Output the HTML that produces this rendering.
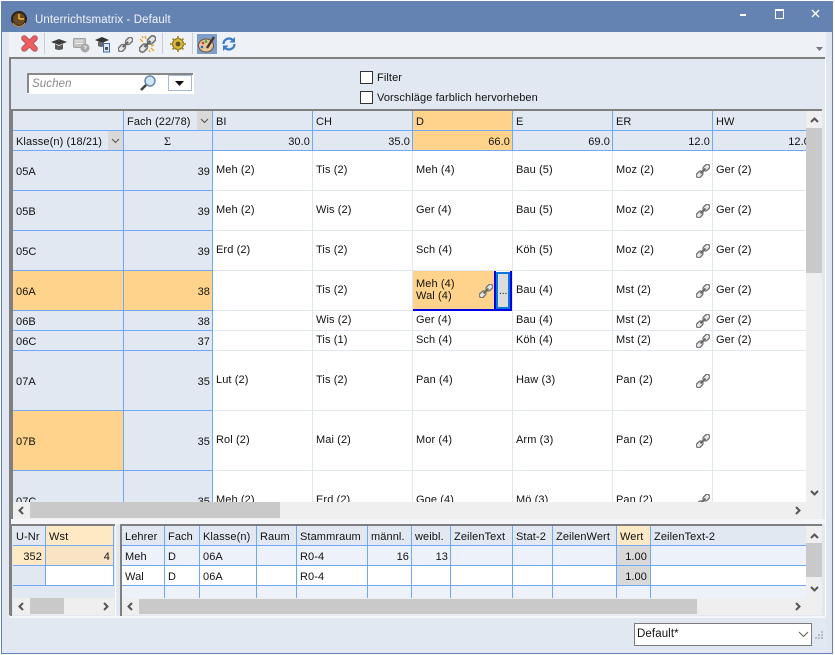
<!DOCTYPE html>
<html><head><meta charset="utf-8"><style>
html,body{margin:0;padding:0}
body{width:835px;height:655px;position:relative;overflow:hidden;background:#fff;font-family:"Liberation Sans",sans-serif;font-size:11px;letter-spacing:.1px;color:#111}
div,span,svg{position:absolute}
span{white-space:nowrap;line-height:14px;height:14px;margin-top:1px}
span.r{text-align:right}
.hb{background:#e1e8f1}
.bv{width:1px;background:#6fa8f7}
.bh{height:1px;background:#6fa8f7}
.lv{width:1px;background:#e0e7f3}
.lh{height:1px;background:#e0e7f3}
.arrow{fill:none;stroke:#555;stroke-width:2}
</style></head><body>
<svg width="0" height="0" style="left:0;top:0"><defs>
<symbol id="chain" viewBox="0 0 14 14"><g transform="rotate(-45 7 7)"><rect x="-1.5" y="4.6" width="7.5" height="4.8" rx="2.4" fill="#e8e8e8" stroke="#777" stroke-width="1.4"/><rect x="8" y="4.6" width="7.5" height="4.8" rx="2.4" fill="#e8e8e8" stroke="#777" stroke-width="1.4"/><path d="M3.5 7H10.5" stroke="#666" stroke-width="2"/></g></symbol>
</defs></svg>

<!-- window frame -->
<div style="left:1px;top:1px;width:832px;height:653px;background:#e1e8f1"></div>
<div style="left:1px;top:1px;width:832px;height:31px;background:#6583b2"></div>
<div style="left:1px;top:1px;width:1px;height:652px;background:#6583b2"></div>
<div style="left:832px;top:1px;width:1px;height:652px;background:#6583b2"></div>
<div style="left:1px;top:653px;width:832px;height:1px;background:#6583b2"></div>

<!-- title -->
<svg style="left:10px;top:10px" width="18" height="18" viewBox="0 0 18 18"><circle cx="9" cy="9" r="8" fill="#2a2118"/><circle cx="9" cy="9" r="6" fill="#6a4a26"/><path d="M9 9V4M9 9H14" stroke="#f5b526" stroke-width="1.5"/><path d="M3 13A7 7 0 0 0 15 13" stroke="#d9a25c" fill="none"/></svg>
<span style="left:35px;top:12px;color:#f1f4f9;font-size:11.5px;letter-spacing:.08px">Unterrichtsmatrix - Default</span>
<div style="left:740px;top:14px;width:6px;height:2px;background:#fff"></div>
<div style="left:775px;top:9px;width:7px;height:7px;border:1px solid #fff;border-top-width:2px"></div>
<svg style="left:810px;top:8px" width="11" height="11" viewBox="0 0 11 11"><path d="M2 2L9 9M9 2L2 9" stroke="#fff" stroke-width="1.4"/></svg>

<!-- toolbar -->
<div style="left:9px;top:32px;width:817px;height:25px;background:#eef1f6"></div>
<div style="left:826px;top:32px;width:6px;height:621px;background:#dfe6f0"></div>
<svg style="left:21px;top:35px" width="17" height="17" viewBox="0 0 17 17"><path d="M3.2 3.2L13.8 13.8M13.8 3.2L3.2 13.8" stroke="#b4565a" stroke-width="6" stroke-linecap="round"/><path d="M3.2 3.2L13.8 13.8M13.8 3.2L3.2 13.8" stroke="#ef5d60" stroke-width="4" stroke-linecap="round"/></svg>
<div style="left:44px;top:33px;width:1px;height:21px;background:#c9ced6"></div>
<svg style="left:51px;top:38px" width="16" height="13" viewBox="0 0 16 13"><path d="M0 4L8 1L16 4L8 7Z" fill="#3c3c3c"/><path d="M4 6V11Q8 13 12 11V6L8 8Z" fill="#5a5a5a"/></svg>
<svg style="left:73px;top:38px" width="17" height="15" viewBox="0 0 17 15"><rect x="0.5" y="0.5" width="12" height="9" rx="1" fill="#c4c4c4" stroke="#a2a2a2"/><path d="M2 3H10M2 5.5H10" stroke="#eee"/><circle cx="12" cy="10" r="4.5" fill="#a8a8a8"/><path d="M10.7 8.8Q12 7.5 13.2 8.8Q13.2 10 12 10.3V11" stroke="#eee" fill="none"/></svg>
<svg style="left:95px;top:37px" width="16" height="16" viewBox="0 0 16 16"><path d="M0 3L7 0L14 3L7 6Z" fill="#333"/><path d="M3 5V9Q7 11 9 9V5Z" fill="#666"/><rect x="8.5" y="6.5" width="6" height="8.5" fill="#dfe7f3" stroke="#3a6aa8"/><rect x="10" y="10" width="3" height="3" fill="#555"/></svg>
<svg style="left:118px;top:37px" width="15" height="15"><use href="#chain" width="15" height="15"/></svg>
<svg style="left:139px;top:35px" width="17" height="18" viewBox="0 0 17 18"><use href="#chain" width="17" height="18"/><path d="M1 4L4 7M6 1L7 4M12 13L15 16M15 10L12 11M3 1L4 3M10 15L11 17" stroke="#e8a51c" stroke-width="1.3"/></svg>
<div style="left:162px;top:33px;width:1px;height:21px;background:#c9ced6"></div>
<svg style="left:170px;top:36px" width="16" height="16" viewBox="0 0 16 16"><circle cx="8" cy="8" r="5.5" fill="#d8b83a" stroke="#7c6a22"/><circle cx="8" cy="8" r="2.4" fill="#5f5220"/><path d="M8 0V3M8 13V16M0 8H3M13 8H16M2.5 2.5L4.5 4.5M11.5 11.5L13.5 13.5M13.5 2.5L11.5 4.5M2.5 13.5L4.5 11.5" stroke="#a68f2c" stroke-width="1.8"/></svg>
<div style="left:192px;top:33px;width:1px;height:21px;background:#c9ced6"></div>
<div style="left:197px;top:34px;width:20px;height:20px;background:#7d9dcb"></div>
<svg style="left:198px;top:35px" width="18" height="18" viewBox="0 0 18 18"><ellipse cx="8" cy="10.5" rx="7.5" ry="6.5" fill="#e3c79c" stroke="#6e5230"/><circle cx="5" cy="8" r="1.3" fill="#d33"/><circle cx="8" cy="6.5" r="1.3" fill="#3a3"/><circle cx="4" cy="12" r="1.3" fill="#36c"/><path d="M9 13L16 2" stroke="#4a3420" stroke-width="2.4"/></svg>
<svg style="left:221px;top:36px" width="16" height="16" viewBox="0 0 16 16"><circle cx="8" cy="8" r="6.5" fill="#e7f0fa"/><path d="M2.5 8A5.5 5.5 0 0 1 12 4.3M13.5 8A5.5 5.5 0 0 1 4 11.7" fill="none" stroke="#3d7cc4" stroke-width="2.2"/><path d="M13.5 1.5V6H9M2.5 14.5V10H7" fill="#3d7cc4" stroke="#3d7cc4"/></svg>
<svg style="left:816px;top:47px" width="7" height="4"><path d="M0 0H7L3.5 4Z" fill="#777"/></svg>

<!-- panel -->
<div style="left:9px;top:57px;width:816px;height:2px;background:#7f7f7f"></div>
<div style="left:9px;top:57px;width:2px;height:558px;background:#7f7f7f"></div>
<div style="left:825px;top:58px;width:1px;height:559px;background:#fff"></div>
<div style="left:9px;top:616px;width:817px;height:2px;background:#f4f6f9"></div>

<!-- search -->
<div style="left:27px;top:73px;width:167px;height:21px;background:#fff"></div>
<div style="left:27px;top:73px;width:166px;height:2px;background:#888"></div>
<div style="left:27px;top:73px;width:2px;height:20px;background:#888"></div>
<span style="left:32px;top:76px;font-style:italic;color:#8a8a8a;font-size:11.5px">Suchen</span>
<svg style="left:139px;top:74px" width="18" height="18" viewBox="0 0 18 18"><circle cx="11" cy="7" r="5" fill="#cfe6f7" stroke="#6a8aa8" stroke-width="1.5"/><path d="M7 11L2 16" stroke="#444" stroke-width="2.6"/></svg>
<div style="left:168px;top:75px;width:24px;height:16px;border:1px solid #a9b8cf;background:#fff;box-sizing:border-box"></div>
<svg style="left:175px;top:81px" width="9" height="5"><path d="M0 0H9L4.5 5Z" fill="#111"/></svg>

<!-- checkboxes -->
<div style="left:360px;top:71px;width:11px;height:11px;border:1px solid #333;background:#fff"></div>
<span style="left:377px;top:70px">Filter</span>
<div style="left:360px;top:91px;width:11px;height:11px;border:1px solid #333;background:#fff"></div>
<span style="left:377px;top:90px">Vorschläge farblich hervorheben</span>

<!-- main grid frame -->
<div style="left:11px;top:109px;width:811px;height:2px;background:#7f7f7f"></div>
<div style="left:11px;top:109px;width:2px;height:410px;background:#7f7f7f"></div>

<div style="left:13px;top:111px;width:793px;height:391px;overflow:hidden;background:#fff">
<div style="left:-13px;top:-111px;width:835px;height:655px">
 <div class="hb" style="left:13px;top:111px;width:800px;height:40px"></div>
 <div class="hb" style="left:13px;top:151px;width:199px;height:360px"></div>
 <div style="left:413px;top:111px;width:99px;height:39px;background:#ffd38b"></div>
 <div style="left:13px;top:271px;width:199px;height:39px;background:#ffd38b"></div>
 <div style="left:13px;top:411px;width:110px;height:59px;background:#ffd38b"></div>
 <div style="left:413px;top:271px;width:82px;height:38px;background:#ffd38b"></div>

 <!-- light lines -->
 <div class="lv" style="left:312px;top:151px;height:360px"></div>
 <div class="lv" style="left:412px;top:151px;height:360px"></div>
 <div class="lv" style="left:512px;top:151px;height:360px"></div>
 <div class="lv" style="left:612px;top:151px;height:360px"></div>
 <div class="lv" style="left:712px;top:151px;height:360px"></div>
 <div class="lh" style="left:213px;top:190px;width:600px"></div>
 <div class="lh" style="left:213px;top:230px;width:600px"></div>
 <div class="lh" style="left:213px;top:270px;width:600px"></div>
 <div class="lh" style="left:213px;top:310px;width:600px"></div>
 <div class="lh" style="left:213px;top:330px;width:600px"></div>
 <div class="lh" style="left:213px;top:350px;width:600px"></div>
 <div class="lh" style="left:213px;top:410px;width:600px"></div>
 <div class="lh" style="left:213px;top:470px;width:600px"></div>

 <!-- blue lines -->
 <div class="bh" style="left:123px;top:130px;width:690px"></div>
 <div class="bh" style="left:13px;top:130px;width:110px"></div>
 <div class="bh" style="left:13px;top:150px;width:800px"></div>
 <div class="bv" style="left:123px;top:111px;height:400px"></div>
 <div class="bv" style="left:212px;top:111px;height:400px"></div>
 <div class="bv" style="left:312px;top:111px;height:40px"></div>
 <div class="bv" style="left:412px;top:111px;height:40px"></div>
 <div class="bv" style="left:512px;top:111px;height:40px"></div>
 <div class="bv" style="left:612px;top:111px;height:40px"></div>
 <div class="bv" style="left:712px;top:111px;height:40px"></div>
 <div class="bh" style="left:13px;top:190px;width:199px"></div>
 <div class="bh" style="left:13px;top:230px;width:199px"></div>
 <div class="bh" style="left:13px;top:270px;width:199px"></div>
 <div class="bh" style="left:13px;top:310px;width:199px"></div>
 <div class="bh" style="left:13px;top:330px;width:199px"></div>
 <div class="bh" style="left:13px;top:350px;width:199px"></div>
 <div class="bh" style="left:13px;top:410px;width:199px"></div>
 <div class="bh" style="left:13px;top:470px;width:199px"></div>

 <!-- header -->
 <span style="left:127px;top:114px">Fach (22/78)</span>
 <div style="left:197px;top:111px;width:15px;height:19px;background:#d9d9d9"></div>
 <svg style="left:200px;top:118px" width="9" height="6"><path d="M1 1L4.5 4.5L8 1" fill="none" stroke="#555" stroke-width="1.1"/></svg>
 <span style="left:216px;top:114px">BI</span>
 <span style="left:316px;top:114px">CH</span>
 <span style="left:416px;top:114px">D</span>
 <span style="left:516px;top:114px">E</span>
 <span style="left:616px;top:114px">ER</span>
 <span style="left:716px;top:114px">HW</span>

 <span style="left:16px;top:134px">Klasse(n) (18/21)</span>
 <div style="left:108px;top:131px;width:15px;height:19px;background:#d9d9d9"></div>
 <svg style="left:111px;top:138px" width="9" height="6"><path d="M1 1L4.5 4.5L8 1" fill="none" stroke="#555" stroke-width="1.1"/></svg>
 <span style="left:164px;top:133px;font-family:'Liberation Serif',serif;font-size:12px">Σ</span>
 <span class="r" style="left:250px;width:60px;top:134px">30.0</span>
 <span class="r" style="left:350px;width:60px;top:134px">35.0</span>
 <span class="r" style="left:450px;width:60px;top:134px">66.0</span>
 <span class="r" style="left:550px;width:60px;top:134px">69.0</span>
 <span class="r" style="left:650px;width:60px;top:134px">12.0</span>
 <span class="r" style="left:750px;width:60px;top:134px">12.0</span>

 <!-- class labels -->
 <span style="left:16px;top:164px">05A</span><span class="r" style="left:170px;width:40px;top:164px">39</span>
 <span style="left:16px;top:204px">05B</span><span class="r" style="left:170px;width:40px;top:204px">39</span>
 <span style="left:16px;top:244px">05C</span><span class="r" style="left:170px;width:40px;top:244px">39</span>
 <span style="left:16px;top:284px">06A</span><span class="r" style="left:170px;width:40px;top:284px">38</span>
 <span style="left:16px;top:314px">06B</span><span class="r" style="left:170px;width:40px;top:314px">38</span>
 <span style="left:16px;top:334px">06C</span><span class="r" style="left:170px;width:40px;top:334px">37</span>
 <span style="left:16px;top:374px">07A</span><span class="r" style="left:170px;width:40px;top:374px">35</span>
 <span style="left:16px;top:434px">07B</span><span class="r" style="left:170px;width:40px;top:434px">35</span>
 <span style="left:16px;top:494px">07C</span><span class="r" style="left:170px;width:40px;top:494px">35</span>

 <!-- cells -->
 <span style="left:216px;top:162px">Meh (2)</span><span style="left:316px;top:162px">Tis (2)</span><span style="left:416px;top:162px">Meh (4)</span><span style="left:516px;top:162px">Bau (5)</span><span style="left:616px;top:162px">Moz (2)</span><span style="left:716px;top:162px">Ger (2)</span>
 <span style="left:216px;top:202px">Meh (2)</span><span style="left:316px;top:202px">Wis (2)</span><span style="left:416px;top:202px">Ger (4)</span><span style="left:516px;top:202px">Bau (5)</span><span style="left:616px;top:202px">Moz (2)</span><span style="left:716px;top:202px">Ger (2)</span>
 <span style="left:216px;top:242px">Erd (2)</span><span style="left:316px;top:242px">Tis (2)</span><span style="left:416px;top:242px">Sch (4)</span><span style="left:516px;top:242px">Köh (5)</span><span style="left:616px;top:242px">Moz (2)</span><span style="left:716px;top:242px">Ger (2)</span>
 <span style="left:316px;top:282px">Tis (2)</span><span style="left:416px;top:277px;line-height:12px">Meh (4)</span><span style="left:416px;top:289px;line-height:12px">Wal (4)</span><span style="left:516px;top:282px">Bau (4)</span><span style="left:616px;top:282px">Mst (2)</span><span style="left:716px;top:282px">Ger (2)</span>
 <span style="left:316px;top:312px">Wis (2)</span><span style="left:416px;top:312px">Ger (4)</span><span style="left:516px;top:312px">Bau (4)</span><span style="left:616px;top:312px">Mst (2)</span><span style="left:716px;top:312px">Ger (2)</span>
 <span style="left:316px;top:332px">Tis (1)</span><span style="left:416px;top:332px">Sch (4)</span><span style="left:516px;top:332px">Köh (4)</span><span style="left:616px;top:332px">Mst (2)</span><span style="left:716px;top:332px">Ger (2)</span>
 <span style="left:216px;top:372px">Lut (2)</span><span style="left:316px;top:372px">Tis (2)</span><span style="left:416px;top:372px">Pan (4)</span><span style="left:516px;top:372px">Haw (3)</span><span style="left:616px;top:372px">Pan (2)</span>
 <span style="left:216px;top:432px">Rol (2)</span><span style="left:316px;top:432px">Mai (2)</span><span style="left:416px;top:432px">Mor (4)</span><span style="left:516px;top:432px">Arm (3)</span><span style="left:616px;top:432px">Pan (2)</span>
 <span style="left:216px;top:492px">Meh (2)</span><span style="left:316px;top:492px">Erd (2)</span><span style="left:416px;top:492px">Goe (4)</span><span style="left:516px;top:492px">Mö (3)</span><span style="left:616px;top:492px">Pan (2)</span>

 <!-- chain icons -->
 <svg style="left:696px;top:164px" width="14" height="14"><use href="#chain"/></svg>
 <svg style="left:696px;top:204px" width="14" height="14"><use href="#chain"/></svg>
 <svg style="left:696px;top:244px" width="14" height="14"><use href="#chain"/></svg>
 <svg style="left:696px;top:284px" width="14" height="14"><use href="#chain"/></svg>
 <svg style="left:696px;top:314px" width="14" height="14"><use href="#chain"/></svg>
 <svg style="left:696px;top:334px" width="14" height="14"><use href="#chain"/></svg>
 <svg style="left:696px;top:374px" width="14" height="14"><use href="#chain"/></svg>
 <svg style="left:696px;top:434px" width="14" height="14"><use href="#chain"/></svg>
 <svg style="left:696px;top:494px" width="14" height="14"><use href="#chain"/></svg>
 <svg style="left:479px;top:284px" width="14" height="14"><use href="#chain"/></svg>

 <!-- selected cell -->
 <div style="left:413px;top:309px;width:99px;height:2px;background:#0000e6"></div>
 <div style="left:494px;top:271px;width:2px;height:40px;background:#0000e6"></div>
 <div style="left:510px;top:271px;width:2px;height:40px;background:#0000e6"></div>
 <div style="left:496px;top:272px;width:10px;height:33px;border:2px solid #0a78d6;background:#dcdcdc"></div>
 <span style="left:499px;top:284px;font-size:10px;letter-spacing:0">...</span>
</div></div>

<!-- main v scrollbar -->
<div style="left:806px;top:111px;width:16px;height:391px;background:#efefef"></div>
<div style="left:806px;top:128px;width:16px;height:145px;background:#c9c9c9"></div>
<svg style="left:810px;top:117px" width="9" height="6"><path class="arrow" d="M1 5L4.5 1.5L8 5"/></svg>
<svg style="left:810px;top:490px" width="9" height="6"><path class="arrow" d="M1 1L4.5 4.5L8 1"/></svg>
<!-- main h scrollbar -->
<div style="left:13px;top:502px;width:809px;height:17px;background:#efefef"></div>
<div style="left:30px;top:502px;width:250px;height:16px;background:#c9c9c9"></div>
<svg style="left:18px;top:506px" width="6" height="9"><path class="arrow" d="M5 1L1.5 4.5L5 8"/></svg>
<svg style="left:795px;top:506px" width="6" height="9"><path class="arrow" d="M1 1L4.5 4.5L1 8"/></svg>

<!-- splitter -->
<div style="left:11px;top:519px;width:814px;height:5px;background:#f3f5f8"></div>

<!-- bottom left grid -->
<div style="left:10px;top:524px;width:105px;height:92px;background:#e1e8f1"></div>
<div style="left:10px;top:524px;width:105px;height:2px;background:#7f7f7f"></div>
<div style="left:10px;top:524px;width:2px;height:92px;background:#7f7f7f"></div>
<div style="left:115px;top:524px;width:1px;height:92px;background:#fff"></div>
<div style="left:46px;top:526px;width:67px;height:19px;background:#ffe8c4"></div>
<div style="left:13px;top:546px;width:32px;height:19px;background:#ffe8c4"></div>
<div style="left:46px;top:546px;width:67px;height:19px;background:#f8e3c4"></div>
<div style="left:46px;top:566px;width:67px;height:19px;background:#fff"></div>
<div class="bh" style="left:13px;top:545px;width:101px"></div>
<div class="bh" style="left:13px;top:565px;width:101px"></div>
<div class="bh" style="left:13px;top:585px;width:101px"></div>
<div class="bv" style="left:45px;top:526px;height:60px"></div>
<div class="bv" style="left:113px;top:526px;height:60px"></div>
<span style="left:16px;top:529px">U-Nr</span>
<span style="left:49px;top:529px">Wst</span>
<span class="r" style="left:12px;width:30px;top:549px">352</span>
<span class="r" style="left:70px;width:40px;top:549px">4</span>
<div style="left:13px;top:598px;width:101px;height:17px;background:#efefef"></div>
<div style="left:30px;top:598px;width:34px;height:16px;background:#c9c9c9"></div>
<svg style="left:18px;top:602px" width="6" height="9"><path class="arrow" d="M5 1L1.5 4.5L5 8"/></svg>
<svg style="left:103px;top:602px" width="6" height="9"><path class="arrow" d="M1 1L4.5 4.5L1 8"/></svg>

<!-- bottom right grid -->
<div style="left:120px;top:524px;width:702px;height:2px;background:#7f7f7f"></div>
<div style="left:120px;top:524px;width:2px;height:92px;background:#7f7f7f"></div>
<div class="hb" style="left:122px;top:526px;width:684px;height:19px"></div>
<div style="left:122px;top:546px;width:684px;height:19px;background:#ecf1fa"></div>
<div style="left:122px;top:566px;width:684px;height:19px;background:#fff"></div>
<div style="left:122px;top:586px;width:684px;height:12px;background:#ecf1fa"></div>
<div style="left:617px;top:526px;width:33px;height:19px;background:#ffe8c4"></div>
<div style="left:617px;top:546px;width:33px;height:19px;background:#d9d9d9"></div>
<div style="left:617px;top:566px;width:33px;height:19px;background:#d9d9d9"></div>
<div class="bh" style="left:122px;top:545px;width:684px"></div>
<div class="bh" style="left:122px;top:565px;width:684px"></div>
<div class="bh" style="left:122px;top:585px;width:684px"></div>
<div class="bv" style="left:164px;top:526px;height:72px"></div>
<div class="bv" style="left:199px;top:526px;height:72px"></div>
<div class="bv" style="left:256px;top:526px;height:72px"></div>
<div class="bv" style="left:296px;top:526px;height:72px"></div>
<div class="bv" style="left:367px;top:526px;height:72px"></div>
<div class="bv" style="left:411px;top:526px;height:72px"></div>
<div class="bv" style="left:450px;top:526px;height:72px"></div>
<div class="bv" style="left:512px;top:526px;height:72px"></div>
<div class="bv" style="left:552px;top:526px;height:72px"></div>
<div class="bv" style="left:616px;top:526px;height:72px"></div>
<div class="bv" style="left:650px;top:526px;height:72px"></div>
<span style="left:125px;top:529px">Lehrer</span>
<span style="left:168px;top:529px">Fach</span>
<span style="left:203px;top:529px">Klasse(n)</span>
<span style="left:260px;top:529px">Raum</span>
<span style="left:300px;top:529px">Stammraum</span>
<span style="left:371px;top:529px">männl.</span>
<span style="left:415px;top:529px">weibl.</span>
<span style="left:454px;top:529px">ZeilenText</span>
<span style="left:516px;top:529px">Stat-2</span>
<span style="left:556px;top:529px">ZeilenWert</span>
<span style="left:620px;top:529px">Wert</span>
<span style="left:654px;top:529px">ZeilenText-2</span>
<span style="left:125px;top:549px">Meh</span><span style="left:168px;top:549px">D</span><span style="left:203px;top:549px">06A</span><span style="left:300px;top:549px">R0-4</span>
<span class="r" style="left:370px;width:39px;top:549px">16</span><span class="r" style="left:410px;width:38px;top:549px">13</span><span class="r" style="left:610px;width:37px;top:549px">1.00</span>
<span style="left:125px;top:569px">Wal</span><span style="left:168px;top:569px">D</span><span style="left:203px;top:569px">06A</span><span style="left:300px;top:569px">R0-4</span>
<span class="r" style="left:610px;width:37px;top:569px">1.00</span>
<!-- bottom scrollbars -->
<div style="left:806px;top:526px;width:16px;height:72px;background:#efefef"></div>
<div style="left:806px;top:543px;width:16px;height:34px;background:#c9c9c9"></div>
<svg style="left:810px;top:533px" width="9" height="6"><path class="arrow" d="M1 5L4.5 1.5L8 5"/></svg>
<svg style="left:810px;top:586px" width="9" height="6"><path class="arrow" d="M1 1L4.5 4.5L8 1"/></svg>
<div style="left:122px;top:598px;width:700px;height:17px;background:#efefef"></div>
<div style="left:139px;top:599px;width:558px;height:15px;background:#c9c9c9"></div>
<svg style="left:127px;top:602px" width="6" height="9"><path class="arrow" d="M5 1L1.5 4.5L5 8"/></svg>
<svg style="left:795px;top:602px" width="6" height="9"><path class="arrow" d="M1 1L4.5 4.5L1 8"/></svg>

<!-- combo -->
<div style="left:634px;top:623px;width:176px;height:21px;border:1px solid #7a7a7a;background:#fff"></div>
<span style="left:637px;top:626px;font-size:11.5px">Default*</span>
<svg style="left:798px;top:631px" width="11" height="7"><path d="M1 1L5.5 5.5L10 1" fill="none" stroke="#666" stroke-width="1.1"/></svg>
<svg style="left:815px;top:631px" width="9" height="9"><path d="M6 0h2v2h-2zM3 3h2v2h-2zM6 3h2v2h-2zM0 6h2v2h-2zM3 6h2v2h-2zM6 6h2v2h-2z" fill="#b5bcc8"/></svg>
</body></html>
